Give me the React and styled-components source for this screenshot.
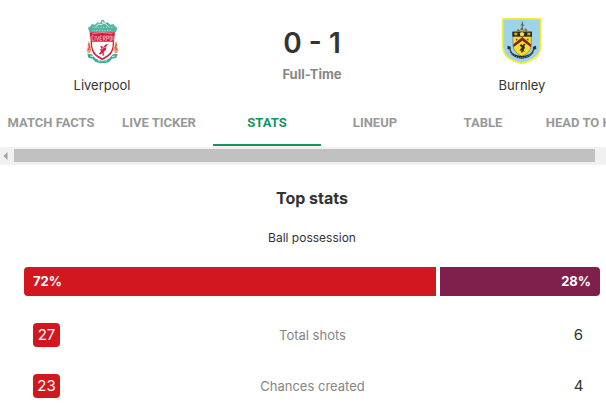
import { useState } from 'react';
import styled, { createGlobalStyle } from 'styled-components';

const tabs = ['Match Facts', 'Live Ticker', 'Stats', 'Lineup', 'Table', 'Head to Head'];

const possession = { home: 72, away: 28 };

const stats = [
    { label: 'Total shots', home: 27, away: 6 },
    { label: 'Chances created', home: 23, away: 4 },
];

export default function App() {
    const [active, setActive] = useState('Stats');

    return (
        <Page>
            <GlobalStyle />
            <Header>
                <Team>
                    <LiverpoolCrest />
                    <TeamName>Liverpool</TeamName>
                </Team>
                <Result>
                    <Score>0 - 1</Score>
                    <Status>Full-Time</Status>
                </Result>
                <Team>
                    <BurnleyCrest />
                    <TeamName>Burnley</TeamName>
                </Team>
            </Header>

            <TabList>
                {tabs.map((tab) => (
                    <Tab key={tab} $active={tab === active} onClick={() => setActive(tab)}>
                        {tab}
                    </Tab>
                ))}
            </TabList>
            <ScrollTrack>
                <ScrollButton aria-label="Scroll left">
                    <svg width="5" height="8" viewBox="0 0 5 8">
                        <path d="M4.5 0v8L0.5 4z" fill="#a3a3a3" />
                    </svg>
                </ScrollButton>
                <ScrollThumb />
            </ScrollTrack>

            <Stats>
                <Title>Top stats</Title>
                <Subtitle>Ball possession</Subtitle>
                <PossessionBar>
                    <HomeShare style={{ width: `${possession.home}%` }}>{possession.home}%</HomeShare>
                    <AwayShare style={{ width: `${possession.away}%` }}>{possession.away}%</AwayShare>
                </PossessionBar>
                <StatList>
                    {stats.map((stat) => (
                        <StatRow key={stat.label}>
                            <Value $leader={stat.home > stat.away}>{stat.home}</Value>
                            <StatLabel>{stat.label}</StatLabel>
                            <Value $leader={stat.away > stat.home}>{stat.away}</Value>
                        </StatRow>
                    ))}
                </StatList>
            </Stats>
        </Page>
    );
}

function LiverpoolCrest() {
    return (
        <Crest viewBox="63 54 126 144" aria-hidden="true">
            {/* gates */}
            <path d="M88 97l-4-14 7-4 5-7 9 2 8-7 8 2 3-8 4-2 4 2 3 8 8-2 8 7 9-2 5 7 7 4-4 14z" fill="#4fb5a5" />
            <path d="M97 82h62M101 91h54" stroke="#d5efea" strokeWidth="2" strokeDasharray="4 4" />
            <path d="M107 80q9-12 18-6q9-10 20 6" fill="none" stroke="#e6f5f2" strokeWidth="3" />
            <circle cx="128" cy="67" r="3" fill="#d9f0ec" />
            {/* shield */}
            <path d="M89 97h76l-3 26q2 34-16 46-10 7-19 12-10-5-19-12-17-12-16-46z" fill="#cf1f3d" />
            <path d="M96 125h62q2 26-14 39l-17 11-17-11q-15-13-14-39z" fill="#fff" />
            <path d="M96 122V107h5m-5 14h5M105 108v14M109 108l4 14 4-14M126 108h-6v14h6m-6-7h5M130 122v-14h6v6h-5l5 8M140 122v-14h6v7h-5M150 108h5v13h-5zM159 108v13" fill="none" stroke="#f8cfd6" strokeWidth="2" />
            <path d="M97 101q31-7 61 0" fill="none" stroke="#f3a9b5" strokeWidth="2" />
            <path d="M120 137l9 3 9-7 6-1-5 7-1 10-7 7 1 10-4 2-1-9-7 5-3-3 6-7-3-6 5-1z" fill="#d3203f" />
            <path d="M133 135l-7 14M130 144l8-3" stroke="#fff" strokeWidth="1.5" />
            {/* flames and scroll */}
            <path d="M86 124q8 8 4 15l5 6-5 16-8-4q-5-7 1-14-2-9 3-19zM169 124q-8 8-4 15l-5 6 5 16 8-4q5-7-1-14 2-9-3-19z" fill="#ee9a72" />
            <path d="M86 132l3 8-4 10M169 132l-3 8 4 10" fill="none" stroke="#d3423d" strokeWidth="3" />
            <path d="M82 161l13 2 12 13 20 8 20-8 12-13 14-2-4 12-13 3-8 9q-20 10-42 0l-8-9-13-3z" fill="#39a998" />
            <path d="M91 168l9 2M156 170l9-2M113 182q14 6 28 0" fill="none" stroke="#d5efea" strokeWidth="3" />
            <path d="M120 184h15" stroke="#1d7f72" strokeWidth="2" />
        </Crest>
    );
}

function BurnleyCrest() {
    return (
        <Crest viewBox="63 54 126 144" aria-hidden="true">
            <path d="M68 57l57-2 57 2v82q-2 21-14 32-15 12-43 19-28-7-43-19-12-11-14-32z" fill="#9fd3ea" stroke="#f4ee38" strokeWidth="5" />
            {/* shield with chevron */}
            <path d="M99 96h55v40q-1 21-28 33-26-12-27-33z" fill="#f5df2c" stroke="#5c5222" strokeWidth="1.5" />
            <path d="M97 95h59v15H97z" fill="#29281c" />
            <path d="M103 98h9v8h-9zM142 98h9v8h-9z" fill="#cdb532" />
            <path d="M119 99l7-3 7 3-2 9h-10z" fill="#f2df4b" />
            <path d="M100 142v-9l27-22 26 22v9l-26-20z" fill="#842719" />
            <path d="M108 115l5 4-5 3zM145 115l-5 4 5 3z" fill="#443d20" />
            <path d="M119 136l5-4 3 4 6-5 4 2-4 4 2 7-4 5 3 7-5-2-3 4-3-1 2-6-6 2 2-6 4-4z" fill="#393016" />
            {/* crest above the shield */}
            <path d="M109 95l4-8 7 2 4-7 7 7 7-4 6 10z" fill="#82793b" />
            <path d="M127 65v25M122 77l5-5 6 6" fill="none" stroke="#3b494e" strokeWidth="2.5" />
            <path d="M117 87l6 5 7-2 5 4" fill="none" stroke="#efe17a" strokeWidth="2" />
            {/* motto ribbon */}
            <path d="M83 137l9 3q-1 18 12 23 22 11 45-1 11-8 10-22l9-3 1 9-6 3q-4 20-28 26-11 3-22-1-22-6-25-25l-6-3z" fill="#27302f" />
            <path d="M89 148q2 15 15 20 22 11 45-2 13-6 14-19" fill="none" stroke="#bfd5d8" strokeWidth="2" strokeDasharray="3 3" />
        </Crest>
    );
}

const GlobalStyle = createGlobalStyle`
    * {
        box-sizing: border-box;
    }

    body {
        margin: 0;
        overflow: hidden;
        background-color: white;
        color: #333;
        font-family: Inter, Roboto, "Liberation Sans", sans-serif;
        font-size: 13px;
        line-height: 16px;
    }

    button {
        padding: 0;
        border: none;
        background: none;
        font: inherit;
        cursor: pointer;
    }
`;

/* a little wider than the window, the sides run out of view */
const Page = styled.main`
    margin: 0 -21px 0 -3px;
`;

const Header = styled.header`
    display: grid;
    grid-template-columns: repeat(3, 1fr);
    padding-top: 18px;
`;

const Team = styled.div`
    display: flex;
    flex-direction: column;
    align-items: center;
    gap: 11px;
`;

const Crest = styled.svg`
    width: 42px;
    height: 48px;
`;

const TeamName = styled.span`
    font-size: 13px;
`;

const Result = styled.div`
    display: flex;
    flex-direction: column;
    align-items: center;
    gap: 7px;
    padding-top: 9px;
`;

const Score = styled.div`
    font-size: 28px;
    font-weight: 600;
    line-height: 32px;
`;

const Status = styled.div`
    color: #868686;
    font-weight: 700;
`;

const TabList = styled.nav`
    display: flex;
    padding-top: 7px;
    overflow: hidden;
`;

const Tab = styled.button`
    && {
        flex: 0 0 108px;
        height: 46px;
        padding-top: 2px;
        border-bottom: 2px solid ${(props) => (props.$active ? '#15945f' : 'transparent')};
        color: ${(props) => (props.$active ? '#15945f' : '#999')};
        font-family: Roboto, sans-serif;
        font-size: 13px;
        font-weight: 700;
        text-transform: uppercase;
        white-space: nowrap;
    }
`;

const ScrollTrack = styled.div`
    display: flex;
    align-items: stretch;
    height: 18px;
    margin-top: 1px;
    padding: 2px 32px 3px 0;
    background-color: #f1f1f1;
`;

const ScrollButton = styled.button`
    display: flex;
    align-items: center;
    justify-content: center;
    width: 17px;
`;

const ScrollThumb = styled.div`
    flex: 1;
    background-color: #c1c1c1;
`;

const Stats = styled.section`
    padding: 23px 27px 0;
`;

const Title = styled.h2`
    margin: 0;
    font-size: 16px;
    font-weight: 700;
    line-height: 20px;
    text-align: center;
`;

const Subtitle = styled.p`
    margin: 22px 0 21px;
    font-size: 12px;
    text-align: center;
`;

const PossessionBar = styled.div`
    display: flex;
    gap: 4px;
    color: white;
    font-weight: 700;
    line-height: 29px;
`;

const HomeShare = styled.div`
    padding: 0 9px;
    border-radius: 4px 0 0 4px;
    background-color: #d3171e;
`;

const AwayShare = styled(HomeShare)`
    border-radius: 0 4px 4px 0;
    background-color: #7f1f4c;
    text-align: right;
`;

const StatList = styled.div`
    display: grid;
    gap: 27px;
    padding: 27px 8px 0 9px;
`;

const StatRow = styled.div`
    display: flex;
    align-items: center;
    justify-content: space-between;
`;

const Value = styled.span`
    width: 27px;
    border-radius: 4px;
    background-color: ${(props) => (props.$leader ? '#d3171e' : 'transparent')};
    color: ${(props) => (props.$leader ? 'white' : '#333')};
    font-size: 15px;
    line-height: 24px;
    text-align: center;
`;

const StatLabel = styled.span`
    color: #868686;
`;
